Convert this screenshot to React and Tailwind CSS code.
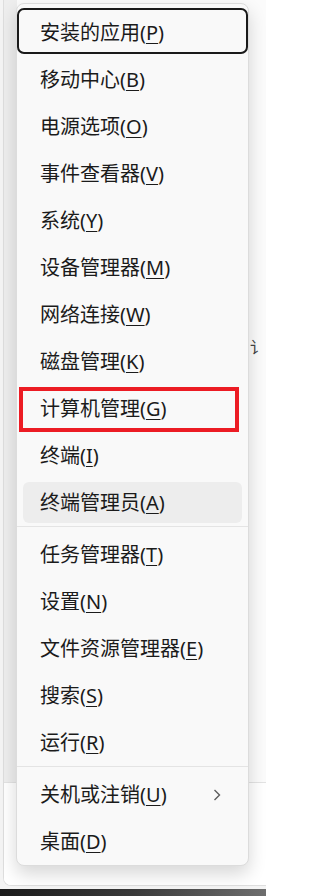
import React from "react";

const groups = [
  [
    ["安装的应用", "P"],
    ["移动中心", "B"],
    ["电源选项", "O"],
    ["事件查看器", "V"],
    ["系统", "Y"],
    ["设备管理器", "M"],
    ["网络连接", "W"],
    ["磁盘管理", "K"],
    ["计算机管理", "G"],
    ["终端", "I"],
    ["终端管理员", "A"],
  ],
  [
    ["任务管理器", "T"],
    ["设置", "N"],
    ["文件资源管理器", "E"],
    ["搜索", "S"],
    ["运行", "R"],
  ],
  [
    ["关机或注销", "U"],
    ["桌面", "D"],
  ],
];

function Item({ label, keyChar, focused, hovered, marked, submenu }) {
  return (
    <div className="relative h-[47px] py-[3px] px-[6px]">
      {focused && (
        <div className="absolute left-0 right-0 top-[-1px] h-[46px] rounded-[7px] border-2 border-[#1a1a1a]" />
      )}
      {marked && (
        <div className="absolute left-[2px] w-[220px] top-[2px] h-[45px] border-4 border-[#ec1c24]" />
      )}
      <div
        className={
          "h-[41px] rounded-[6px] flex items-center pl-[17px] pr-[21px] " +
          (hovered ? "bg-[#ededed]" : "")
        }
      >
        <span className="flex-1 whitespace-nowrap text-[20px] leading-none text-[#1b1b1b]">
          {label}(<span className="underline underline-offset-[3px] decoration-1">{keyChar}</span>)
        </span>
        {submenu && (
          <svg width="8" height="12" viewBox="0 0 8 12" className="shrink-0">
            <path d="M1.5 1 L6.5 6 L1.5 11" fill="none" stroke="#5c5c5c" strokeWidth="1.4" />
          </svg>
        )}
      </div>
    </div>
  );
}

export default function App() {
  return (
    <div
      className="relative w-[266px] h-[896px] overflow-hidden bg-[#f4f4f4]"
      style={{ fontFamily: "'Noto Sans', 'Noto Sans CJK SC', sans-serif" }}
    >
      <div className="flex flex-col h-full">
        <div className="ml-[3px] h-[886px] flex flex-col bg-white border-l border-b border-[#dedede] rounded-bl-[8px] overflow-hidden">
          <div className="h-[782px] flex">
            <div className="w-[13px] bg-[#eeeeee]" />
            <div className="flex-1 bg-[#fbfbfb] overflow-hidden">
              <div className="ml-[233px] mt-[336px] w-[16px] whitespace-nowrap text-[16px] leading-[22px] text-[#444]">讠</div>
            </div>
          </div>
          <div className="flex-1 border-t border-[#e3e3e3] bg-white" />
        </div>
        <div className="h-[3px] bg-[#f4f4f4]" />
        <div className="flex-1 bg-gradient-to-r from-[#1b1b1b] via-[#3a3a3a] to-[#6e6e6e]" />
      </div>

      <div className="absolute left-[16px] top-[3px] w-[233px] h-[863px] rounded-[8px] border border-[#dcdcdc] bg-[#f9f9f9] shadow-[0_8px_18px_rgba(0,0,0,0.16)] pt-[5px]">
        {groups[0].map(([l, k], i) => (
          <Item
            key={l}
            label={l}
            keyChar={k}
            focused={i === 0}
            marked={i === 8}
            hovered={i === 10}
          />
        ))}
        <div className="h-px mt-0 mb-[4px] bg-[#e4e4e4]" />
        {groups[1].map(([l, k]) => (
          <Item key={l} label={l} keyChar={k} />
        ))}
        <div className="h-px mt-0 mb-[4px] bg-[#e4e4e4]" />
        {groups[2].map(([l, k], i) => (
          <Item key={l} label={l} keyChar={k} submenu={i === 0} />
        ))}
      </div>
    </div>
  );
}
